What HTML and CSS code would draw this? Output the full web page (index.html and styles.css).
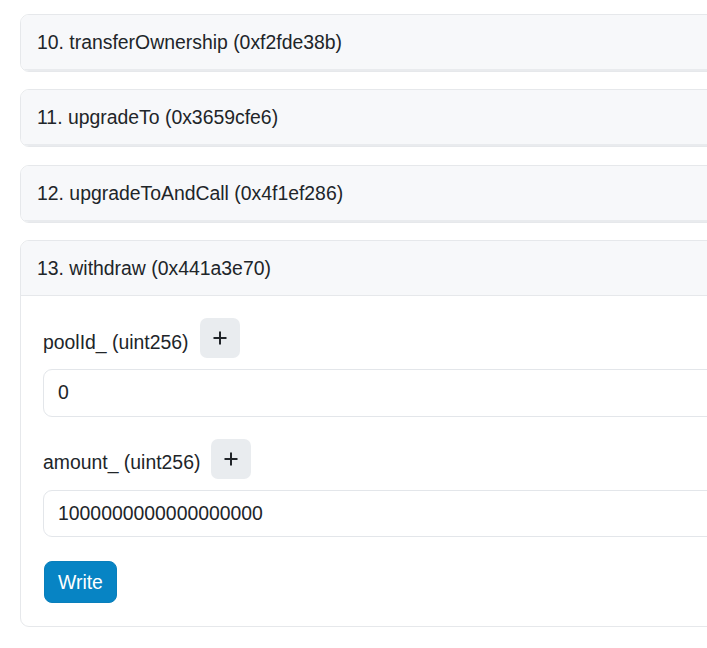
FILE: index.html
```html
<!DOCTYPE html>
<html lang="en">
<head>
<meta charset="utf-8">
<title>Write Contract</title>
<link rel="stylesheet" href="styles.css">
</head>
<body>
<div class="list">
  <div class="card collapsed">
    <div class="card-header">10. transferOwnership (0xf2fde38b)</div>
  </div>
  <div class="card collapsed">
    <div class="card-header">11. upgradeTo (0x3659cfe6)</div>
  </div>
  <div class="card collapsed">
    <div class="card-header">12. upgradeToAndCall (0x4f1ef286)</div>
  </div>
  <div class="card">
    <div class="card-header">13. withdraw (0x441a3e70)</div>
    <div class="card-body">
      <div class="field">
        <div class="label-row">
          <span class="label">poolId_ (uint256)</span>
          <button class="add-btn" type="button" aria-label="add"><svg width="14" height="14" viewBox="0 0 14 14"><path d="M7 0.5V13.5M0.5 7H13.5" stroke="#212529" stroke-width="2" fill="none"/></svg></button>
        </div>
        <input class="input" type="text" value="0">
      </div>
      <div class="field">
        <div class="label-row">
          <span class="label">amount_ (uint256)</span>
          <button class="add-btn" type="button" aria-label="add"><svg width="14" height="14" viewBox="0 0 14 14"><path d="M7 0.5V13.5M0.5 7H13.5" stroke="#212529" stroke-width="2" fill="none"/></svg></button>
        </div>
        <input class="input" type="text" value="1000000000000000000">
      </div>
      <button class="write-btn" type="button">Write</button>
    </div>
  </div>
</div>
</body>
</html>
```

FILE: styles.css
```css
html, body {
  margin: 0;
  padding: 0;
  overflow: hidden;
  background: #ffffff;
}

body {
  font-family: "Liberation Sans", Arial, sans-serif;
  font-size: 19.4px;
  color: #212529;
}

.list {
  padding: 14px 0 0 20px;
  display: flex;
  flex-direction: column;
  gap: 17.4px;
}

.card {
  width: 780px;
  border: 1px solid #e6e8eb;
  border-radius: 9px;
  background: #ffffff;
  overflow: hidden;
}

.card-header {
  background: #f7f8fa;
  padding: 15px 16px;
  line-height: 24px;
  border-bottom: 1px solid #e6e8eb;
}

.collapsed .card-header {
  border-bottom: 2px solid #e9ebee;
}

.card-body {
  padding: 22px 22px 23px;
  display: flex;
  flex-direction: column;
  gap: 22px;
}

.field {
  display: flex;
  flex-direction: column;
  gap: 11px;
}

.label-row {
  display: flex;
  align-items: center;
  gap: 11px;
  height: 40px;
}

.label {
  line-height: 24px;
  padding-top: 7px;
}

.add-btn {
  width: 40px;
  height: 40px;
  border: none;
  border-radius: 7px;
  background: #e9ecef;
  padding: 0;
  display: flex;
  align-items: center;
  justify-content: center;
}

.add-btn svg {
  display: block;
}

.input {
  box-sizing: border-box;
  width: 740px;
  height: 47.5px;
  border: 1px solid #e3e6ea;
  border-radius: 9px;
  padding: 0 14px;
  font-family: "Liberation Sans", Arial, sans-serif;
  font-size: 19.4px;
  color: #212529;
  background: #ffffff;
  outline: none;
}

.write-btn {
  align-self: flex-start;
  margin-top: 2px;
  margin-left: 1px;
  height: 42px;
  padding: 0 13px;
  border: 1px solid #0a7fbb;
  border-radius: 8px;
  background: #0784c4;
  color: #ffffff;
  font-family: "Liberation Sans", Arial, sans-serif;
  font-size: 19.4px;
}
```
